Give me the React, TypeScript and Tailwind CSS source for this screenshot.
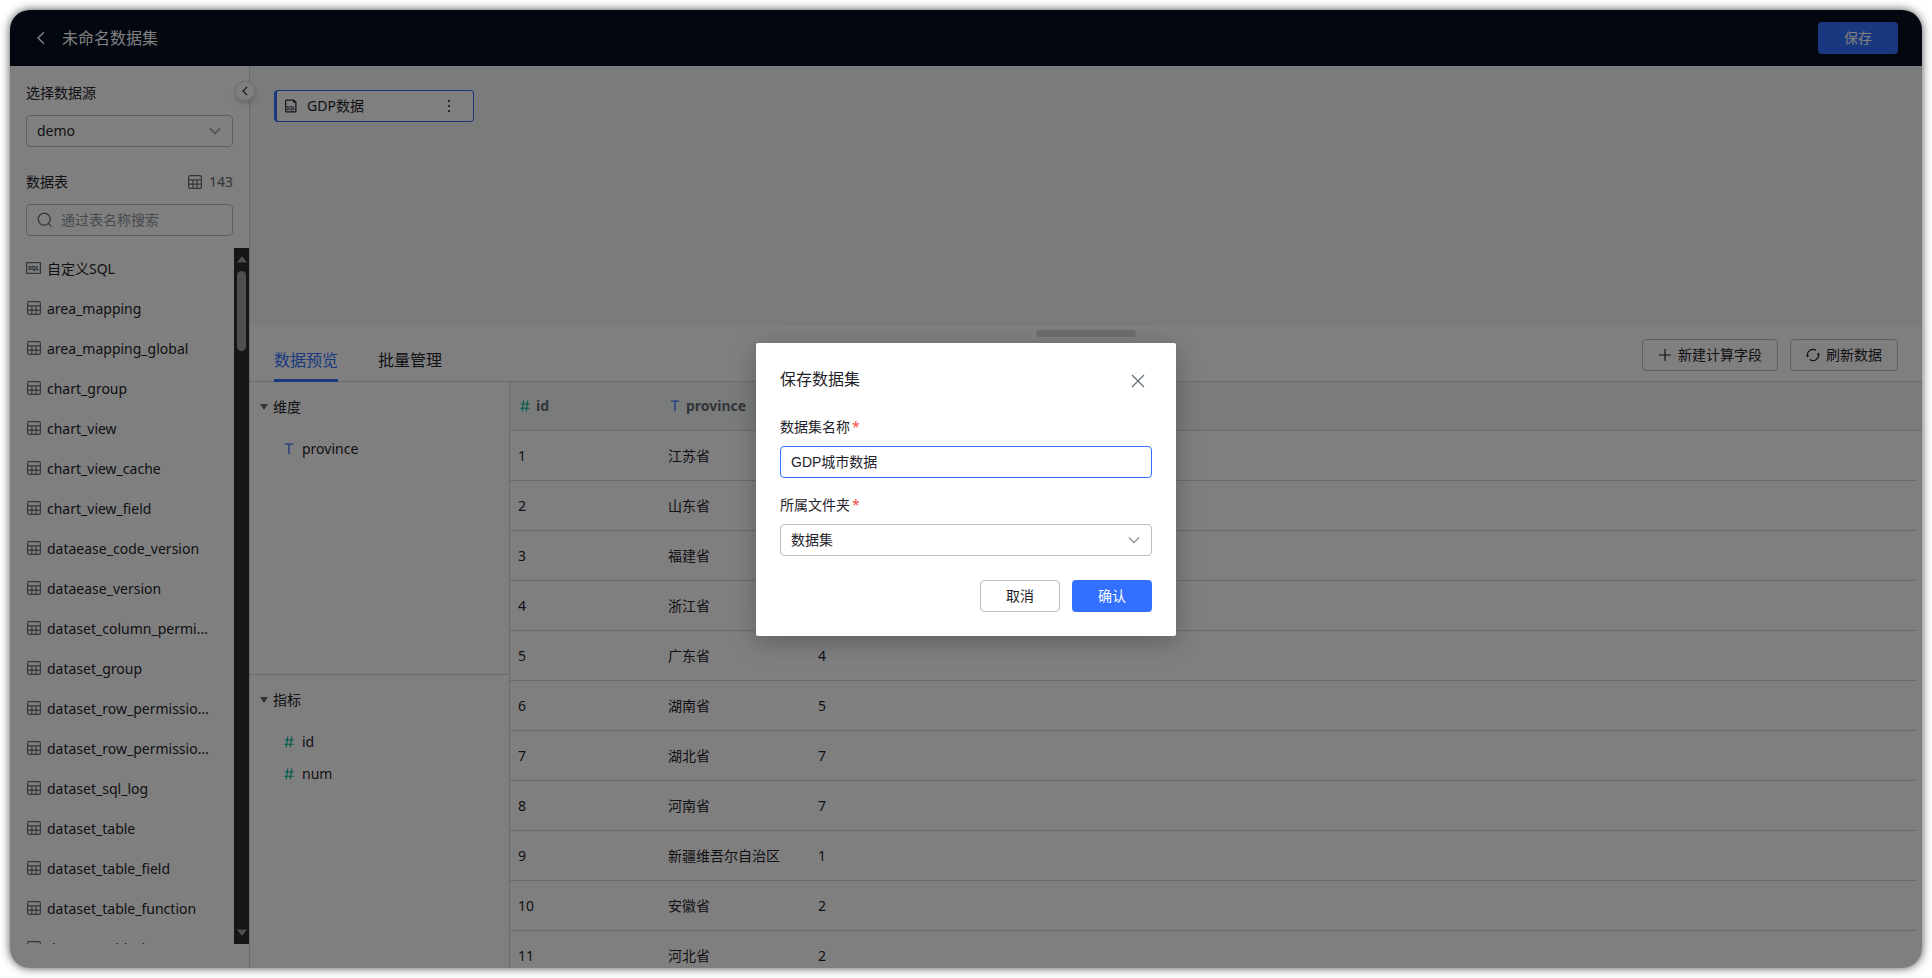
import { useState } from 'react';
import type { ReactNode } from 'react';

const TABLES = [
  'area_mapping',
  'area_mapping_global',
  'chart_group',
  'chart_view',
  'chart_view_cache',
  'chart_view_field',
  'dataease_code_version',
  'dataease_version',
  'dataset_column_permissions',
  'dataset_group',
  'dataset_row_permissions',
  'dataset_row_permissions_tree',
  'dataset_sql_log',
  'dataset_table',
  'dataset_table_field',
  'dataset_table_function',
  'dataset_table_incremental_config',
];

const ROWS = [
  { id: 1, province: '江苏省', num: 13 },
  { id: 2, province: '山东省', num: 8 },
  { id: 3, province: '福建省', num: 4 },
  { id: 4, province: '浙江省', num: 6 },
  { id: 5, province: '广东省', num: 4 },
  { id: 6, province: '湖南省', num: 5 },
  { id: 7, province: '湖北省', num: 7 },
  { id: 8, province: '河南省', num: 7 },
  { id: 9, province: '新疆维吾尔自治区', num: 1 },
  { id: 10, province: '安徽省', num: 2 },
  { id: 11, province: '河北省', num: 2 },
];

function TableIcon() {
  return (
    <svg viewBox="0 0 14 14" fill="none" stroke="currentColor" strokeWidth="1.2" className="size-3.5 shrink-0 text-[#646a73]">
      <rect x="0.6" y="0.6" width="12.8" height="12.8" rx="1.6" />
      <path d="M0.6 4.9h12.8M0.6 9.1h12.8M4.9 4.9v8.5M9.1 4.9v8.5" />
    </svg>
  );
}

function SqlIcon() {
  return (
    <svg viewBox="0 0 15 12" className="h-3 w-[15px] shrink-0 text-[#646a73]">
      <rect x="0.6" y="0.6" width="13.8" height="10.8" fill="none" stroke="currentColor" strokeWidth="1.2" />
      <text x="7.5" y="8" textAnchor="middle" fontSize="5.5" fontWeight="700" fill="currentColor" stroke="currentColor" strokeWidth="0.3">SQL</text>
    </svg>
  );
}

function SqlFileIcon() {
  return (
    <svg viewBox="0 0 12 14" className="h-3.5 w-3 shrink-0 text-[#1f2329]">
      <path d="M1.4 1.1h7.4l2.1 2.1v9a0.7 0.7 0 0 1-0.7 0.7H1.4a0.7 0.7 0 0 1-0.7-0.7V1.8a0.7 0.7 0 0 1 0.7-0.7z" fill="none" stroke="currentColor" strokeWidth="1.2" />
      <path d="M8.2 1v2.8h2.8z" fill="currentColor" />
      <text x="5.8" y="10.5" textAnchor="middle" fontSize="4.5" fontWeight="700" fill="currentColor">SQL</text>
    </svg>
  );
}

function TextType() {
  return (
    <svg viewBox="0 0 10 12" fill="none" stroke="currentColor" strokeWidth="1.3" className="h-3 w-2.5 shrink-0 text-[#3370ff]">
      <path d="M1 1.2h8M5 1.2v10" />
    </svg>
  );
}

function NumberType() {
  return (
    <svg viewBox="0 0 10 12" fill="none" stroke="currentColor" strokeWidth="1.1" className="h-3 w-2.5 shrink-0 text-[#04b49c]">
      <path d="M0.5 4h9.3M0.2 8.2h9.3M3.8 0.6L2.3 11.4M7.7 0.6L6.2 11.4" />
    </svg>
  );
}

function Chevron({ className }: { className: string }) {
  return (
    <svg viewBox="0 0 12 12" fill="none" stroke="currentColor" strokeWidth="1.3" className={className}>
      <path d="M1 3.5l5 5 5-5" />
    </svg>
  );
}

function Caret() {
  return (
    <svg viewBox="0 0 8 6" fill="currentColor" className="h-1.5 w-2 text-[#646a73]">
      <path d="M0 0h8L4 6z" />
    </svg>
  );
}

function FieldGroup({ title, children }: { title: string; children: ReactNode }) {
  return (
    <>
      <button className="mt-[13px] flex h-6 items-center gap-[5px] pl-2.5">
        <Caret />
        {title}
      </button>
      <ul className="mt-3.5">{children}</ul>
    </>
  );
}

function Field({ name, icon }: { name: string; icon: ReactNode }) {
  return (
    <li className="flex h-8 items-center gap-2 pl-[34px]">
      {icon}
      {name}
    </li>
  );
}

function Sidebar() {
  return (
    <aside className="relative flex w-60 shrink-0 flex-col border-r border-[#d5d6d7] pb-6">
      <div className="pt-4 pr-4 pl-4">
        <label htmlFor="source" className="block h-[22px] leading-[22px]">选择数据源</label>
        <div className="relative mt-[11px]">
          <select id="source" className="h-8 w-full appearance-none rounded border border-[#bbbfc4] px-2.5">
            <option>demo</option>
          </select>
          <Chevron className="pointer-events-none absolute top-2.5 right-3 size-3 text-[#8f959e]" />
        </div>
        <div className="mt-6 flex h-[22px] items-center justify-between">
          <label htmlFor="search">数据表</label>
          <span className="flex items-center gap-[7px] text-[#646a73]">
            <TableIcon />
            143
          </span>
        </div>
        <div className="mt-[11px] flex h-8 items-center gap-2 rounded border border-[#bbbfc4] px-2.5">
          <svg viewBox="0 0 16 16" fill="none" stroke="currentColor" strokeWidth="1.2" className="size-4 shrink-0 text-[#646a73]">
            <circle cx="7.2" cy="7.2" r="6" />
            <path d="M11.6 11.6l3 3" />
          </svg>
          <input id="search" placeholder="通过表名称搜索" className="w-full min-w-0 outline-none placeholder:text-[#8f959e]" />
        </div>
      </div>

      <div className="mt-3 flex min-h-0 flex-1">
        <ul className="min-w-0 flex-1 overflow-hidden pr-6 pl-4">
          <li className="flex h-10 items-center gap-1.5">
            <SqlIcon />
            <span className="pt-px">自定义SQL</span>
          </li>
          {TABLES.map((name) => (
            <li key={name} className="flex h-10 items-center gap-1.5 pl-px">
              <TableIcon />
              <span className="truncate pt-0.5">{name}</span>
            </li>
          ))}
        </ul>
        <div className="flex w-[15px] flex-col items-center justify-between bg-[#2c2c2c] py-2 text-[#9f9f9f]">
          <div className="flex flex-col items-center gap-2">
            <svg viewBox="0 0 10 7" fill="currentColor" className="h-[7px] w-2.5"><path d="M5 0l5 6.5H0z" /></svg>
            <div className="h-20 w-[9px] rounded-full bg-[#9f9f9f]" />
          </div>
          <svg viewBox="0 0 10 7" fill="currentColor" className="h-[7px] w-2.5"><path d="M5 7l5-6.5H0z" /></svg>
        </div>
      </div>

      <button
        aria-label="收起"
        className="absolute top-[15px] -right-1.5 z-10 flex size-5 items-center justify-center rounded-full border border-[#dee0e3] bg-white shadow-[0_3px_6px_rgba(31,35,41,0.2)]"
      >
        <Chevron className="size-2.5 rotate-90" />
      </button>
    </aside>
  );
}

function DataTable() {
  return (
    <table className="w-full table-fixed border-separate border-spacing-0 text-left">
      <colgroup>
        <col className="w-[150px]" />
        <col className="w-[150px]" />
        <col />
        <col className="w-1.5" />
      </colgroup>
      <thead className="text-[#646a73]">
        <tr className="h-[49px] bg-[#f5f8f7]">
          <th className="border-b border-[#d5d6d7] px-2.5 font-bold">
            <span className="flex items-center gap-1.5"><NumberType />id</span>
          </th>
          <th className="border-b border-[#d5d6d7] px-2.5 font-bold">
            <span className="flex items-center gap-1.5"><TextType />province</span>
          </th>
          <th className="border-b border-[#d5d6d7] px-2.5 font-bold">
            <span className="flex items-center gap-1.5"><NumberType />num</span>
          </th>
          <th className="border-b border-[#d5d6d7]" />
        </tr>
      </thead>
      <tbody>
        {ROWS.map((row) => (
          <tr key={row.id} className="h-[50px]">
            <td className="border-b border-[#d5d6d7] px-2">{row.id}</td>
            <td className="border-b border-[#d5d6d7] px-2">{row.province}</td>
            <td className="border-b border-[#d5d6d7] px-2">{row.num}</td>
            <td />
          </tr>
        ))}
      </tbody>
    </table>
  );
}

function SaveDialog() {
  const [name, setName] = useState('GDP城市数据');

  return (
    <div className="absolute inset-0 z-20 flex items-center justify-center bg-black/50">
      <div role="dialog" aria-labelledby="dialog-title" className="w-[420px] rounded-[2px] bg-white p-6 shadow-[0_6px_24px_rgba(0,0,0,0.25)]">
        <div className="flex h-6 items-start justify-between">
          <h2 id="dialog-title" className="text-base">保存数据集</h2>
          <button aria-label="关闭" className="flex size-7 items-center justify-center text-[#646a73]">
            <svg viewBox="0 0 14 14" fill="none" stroke="currentColor" strokeWidth="1.2" className="size-3.5">
              <path d="M1 1l12 12M13 1L1 13" />
            </svg>
          </button>
        </div>

        <label htmlFor="name" className="mt-[25px] block h-[22px] leading-[22px]">
          数据集名称<span className="ml-0.5 text-[#f54a45]">*</span>
        </label>
        <input
          id="name"
          value={name}
          onChange={(e) => setName(e.target.value)}
          className="mt-2 block h-8 w-full rounded border border-[#3370ff] px-2.5 pb-0.5 font-['Liberation_Sans','Noto_Sans_CJK_SC',sans-serif] outline-none"
        />

        <label htmlFor="folder" className="mt-4 block h-[22px] leading-[22px]">
          所属文件夹<span className="ml-0.5 text-[#f54a45]">*</span>
        </label>
        <div className="relative mt-2">
          <select id="folder" className="block h-8 w-full appearance-none rounded border border-[#bbbfc4] px-2.5">
            <option>数据集</option>
          </select>
          <Chevron className="pointer-events-none absolute top-2.5 right-3 size-3 text-[#8f959e]" />
        </div>

        <div className="mt-6 flex justify-end gap-3">
          <button className="h-8 w-20 rounded border border-[#bbbfc4]">取消</button>
          <button className="h-8 w-20 rounded bg-[#3370ff] text-white">确认</button>
        </div>
      </div>
    </div>
  );
}

export default function App() {
  return (
    <div className="h-screen bg-white p-2.5 font-['Noto_Sans','Noto_Sans_CJK_SC',sans-serif] text-sm text-[#1f2329]">
      <div className="relative flex h-full flex-col overflow-hidden rounded-[20px] bg-white shadow-[0_0_10px_rgba(0,0,0,0.7)]">
        <header className="flex h-14 shrink-0 items-center bg-[#050e21] px-6 text-white">
          <button aria-label="返回" className="flex w-3.5 justify-center">
            <Chevron className="size-3.5 rotate-90" />
          </button>
          <h1 className="ml-3.5 text-base">未命名数据集</h1>
          <button className="ml-auto h-8 w-20 rounded bg-[#3370ff]">保存</button>
        </header>

        <div className="flex min-h-0 flex-1">
          <Sidebar />

          <main className="flex min-w-0 flex-1 flex-col">
            <section className="h-[260px] shrink-0 bg-[#f5f8f7] p-6">
              <div className="flex h-8 w-[200px] items-center rounded border border-l-3 border-[#3370ff] bg-white pr-[22px] pl-2">
                <SqlFileIcon />
                <span className="ml-2.5">GDP数据</span>
                <button aria-label="更多" className="ml-auto">
                  <svg viewBox="0 0 4 14" fill="currentColor" className="h-3.5 w-1">
                    <circle cx="2" cy="2" r="1.1" />
                    <circle cx="2" cy="7" r="1.1" />
                    <circle cx="2" cy="12" r="1.1" />
                  </svg>
                </button>
              </div>
            </section>

            <div className="relative flex h-14 shrink-0 items-center justify-between border-b border-[#d5d6d7] px-6">
              <div className="absolute top-1 left-1/2 h-[7px] w-[100px] -translate-x-1/2 rounded-full bg-[#d9dadb]" />
              <nav className="flex gap-10 self-stretch text-base">
                <button className="-mb-px border-b-3 border-[#3370ff] pt-3.5 text-[#3370ff]">数据预览</button>
                <button className="-mb-px border-b-3 border-transparent pt-3.5">批量管理</button>
              </nav>
              <div className="flex gap-3 pt-0.5">
                <button className="flex h-8 items-center gap-1.5 rounded border border-[#bbbfc4] px-[15px]">
                  <svg viewBox="0 0 14 14" fill="none" stroke="currentColor" strokeWidth="1.2" className="size-3.5">
                    <path d="M7 1v12M1 7h12" />
                  </svg>
                  新建计算字段
                </button>
                <button className="flex h-8 items-center gap-1.5 rounded border border-[#bbbfc4] px-[15px]">
                  <svg viewBox="0 0 14 14" fill="none" stroke="currentColor" strokeWidth="1.2" className="size-3.5">
                    <path d="M1.5 8A5.6 5.6 0 0 1 10.2 2.4M12.5 6A5.6 5.6 0 0 1 3.8 11.6" />
                    <path d="M0 7.2h3.2L1.6 9.4zM14 6.8h-3.2l1.6-2.2z" fill="currentColor" stroke="none" />
                  </svg>
                  刷新数据
                </button>
              </div>
            </div>

            <div className="flex min-h-0 flex-1">
              <div className="flex w-[260px] shrink-0 flex-col border-r border-[#d5d6d7] pb-0.5">
                <section className="flex-1 border-b border-[#d5d6d7]">
                  <FieldGroup title="维度">
                    <Field name="province" icon={<TextType />} />
                  </FieldGroup>
                </section>
                <section className="flex-1">
                  <FieldGroup title="指标">
                    <Field name="id" icon={<NumberType />} />
                    <Field name="num" icon={<NumberType />} />
                  </FieldGroup>
                </section>
              </div>
              <div className="min-w-0 flex-1 overflow-hidden">
                <DataTable />
              </div>
            </div>
          </main>
        </div>

        <SaveDialog />
      </div>
    </div>
  );
}
